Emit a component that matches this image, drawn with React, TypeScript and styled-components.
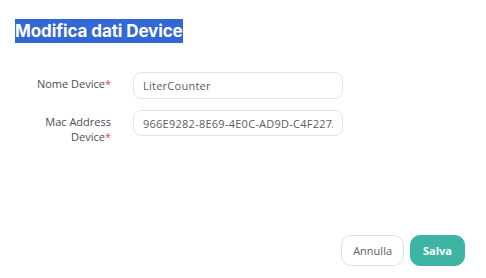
import styled, { createGlobalStyle } from "styled-components";

const GlobalStyle = createGlobalStyle`
  html, body {
    margin: 0;
    padding: 0;
    background: #ffffff;
  }
  body {
    font-family: "Open Sans", "Liberation Sans", sans-serif;
  }
`;

const Page = styled.div`
  width: 486px;
  height: 278px;
  box-sizing: border-box;
  display: flex;
  flex-direction: column;
  padding: 19px 21px 12px 15px;
`;

const Title = styled.h1`
  margin: 0;
  align-self: flex-start;
  background: #3367d4;
  color: #ffffff;
  font-family: "Inter", "Liberation Sans", sans-serif;
  font-size: 17px;
  font-weight: 700;
  line-height: 24px;
  letter-spacing: -0.1px;
`;

const Form = styled.div`
  display: flex;
  flex-direction: column;
  gap: 11px;
  margin-top: 29px;
  margin-left: -15px;
`;

const Row = styled.div`
  display: grid;
  grid-template-columns: 111px 210px;
  column-gap: 22px;
  align-items: start;
`;

const Label = styled.label`
  text-align: right;
  font-size: 11px;
  line-height: 15px;
  color: #4b4d57;
  padding-top: 4px;
`;

const Star = styled.span`
  color: #e5426a;
`;

const Input = styled.input<{ $h?: number }>`
  box-sizing: border-box;
  width: 210px;
  height: ${(p) => p.$h ?? 27}px;
  border: 1px solid #dfe4ea;
  border-radius: 8px;
  padding: 0 9px;
  font-family: "Open Sans", "Liberation Sans", sans-serif;
  font-size: 11px;
  letter-spacing: 0.25px;
  color: #5a5c66;
  background: #fff;
  outline: none;
`;

const Footer = styled.div`
  margin-top: auto;
  display: flex;
  justify-content: flex-end;
  gap: 6px;
`;

const Button = styled.button<{ $primary?: boolean }>`
  box-sizing: border-box;
  height: 31px;
  padding: 0 ${(p) => (p.$primary ? 12 : 11)}px;
  border-radius: 10px;
  font-family: "Open Sans", "Liberation Sans", sans-serif;
  font-size: 11px;
  font-weight: ${(p) => (p.$primary ? 700 : 400)};
  color: ${(p) => (p.$primary ? "#ffffff" : "#5c5e68")};
  background: ${(p) => (p.$primary ? "#3db4a4" : "#ffffff")};
  border: 1px solid ${(p) => (p.$primary ? "#3db4a4" : "#dde2e8")};
  cursor: pointer;
`;

export default function App() {
  return (
    <>
      <GlobalStyle />
      <Page>
        <Title>Modifica dati Device</Title>
        <Form>
          <Row>
            <Label>
              Nome Device<Star>*</Star>
            </Label>
            <Input defaultValue="LiterCounter" />
          </Row>
          <Row>
            <Label>
              Mac Address
              <br />
              Device<Star>*</Star>
            </Label>
            <Input $h={26} defaultValue="966E9282-8E69-4E0C-AD9D-C4F227A1B3D0" />
          </Row>
        </Form>
        <Footer>
          <Button>Annulla</Button>
          <Button $primary>Salva</Button>
        </Footer>
      </Page>
    </>
  );
}
